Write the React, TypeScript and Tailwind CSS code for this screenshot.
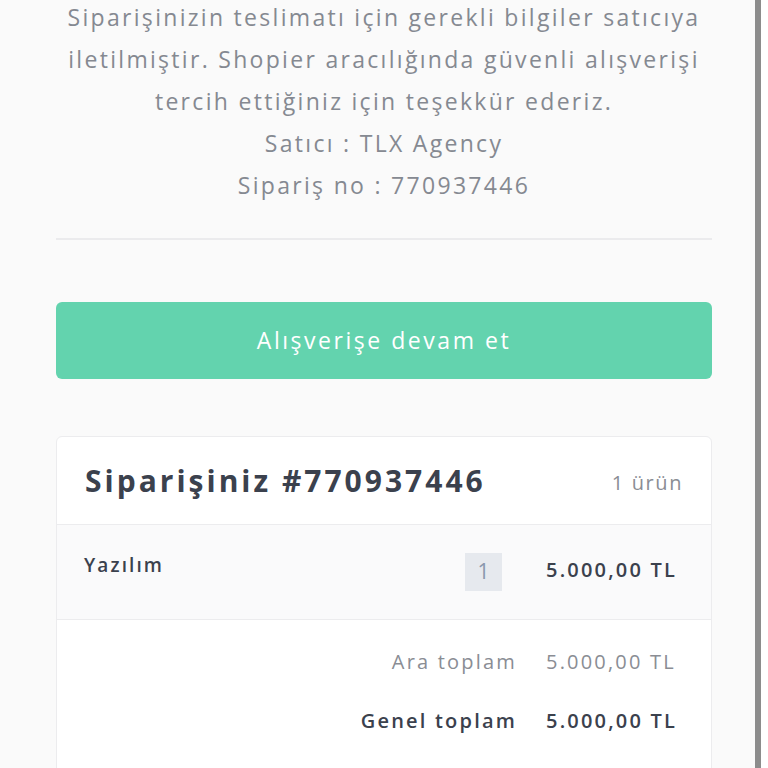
export default function App() {
  const font = { fontFamily: '"Open Sans", "Noto Sans", sans-serif' }

  return (
    <div className="flex h-[768px] w-[768px] overflow-hidden bg-[#fafafa]" style={font}>
      {/* Page content */}
      <div className="w-[755px] shrink-0 overflow-hidden">
        <div className="-mt-[4px] ml-[56px] mr-[43px]">
          {/* Thank-you message */}
          <div className="-mx-4 whitespace-nowrap text-center text-[23px] font-medium leading-[42px] tracking-[0.1em] text-[#858991]">
            <p>
              Siparişinizin teslimatı için gerekli bilgiler satıcıya
              <br />
              iletilmiştir. Shopier aracılığında güvenli alışverişi
              <br />
              tercih ettiğiniz için teşekkür ederiz.
            </p>
            <p>Satıcı : TLX Agency</p>
            <p>Sipariş no : 770937446</p>
          </div>

          <div className="mt-[32px] h-[2px] bg-[#ebebed]" />

          {/* Continue shopping */}
          <button className="mt-[62px] flex h-[77px] w-full items-center justify-center rounded-[6px] bg-[#63d3ae] text-[23px] font-medium tracking-[0.11em] text-white">
            Alışverişe devam et
          </button>

          {/* Order summary card */}
          <div className="mt-[57px] overflow-hidden rounded-[6px] border border-[#ececee] bg-white">
            <div className="flex h-[88px] items-center justify-between border-b border-[#ececee] pl-[28px] pr-[28px]">
              <h2 className="text-[30px] font-bold tracking-[0.1em] text-[#3b414d]">Siparişiniz #770937446</h2>
              <span className="mt-[4px] text-[20px] tracking-[0.08em] text-[#8a8d94]">1 ürün</span>
            </div>

            <div className="flex h-[95px] items-start border-b border-[#ececee] bg-[#fafafb] pl-[27px] pr-[32px] pt-[26px]">
              <span className="text-[19px] font-semibold tracking-[0.11em] text-[#3b414d]">Yazılım</span>
              <span className="ml-auto mt-[2px] flex h-[38px] w-[37px] items-center justify-center bg-[#e6e9ee] text-[21px] text-[#8a97ad]">
                1
              </span>
              <span className="ml-[44px] mt-[4px] w-[133px] whitespace-nowrap text-[20px] font-semibold tracking-[0.11em] text-[#3b414d]">
                5.000,00 TL
              </span>
            </div>

            <div className="flex flex-col gap-[29px] pb-[40px] pr-[32px] pt-[27px]">
              <div className="flex items-center justify-end whitespace-nowrap text-[20px] tracking-[0.11em] text-[#8a8d94]">
                <span>Ara toplam</span>
                <span className="ml-[29px] w-[133px]">5.000,00 TL</span>
              </div>
              <div className="flex items-center justify-end whitespace-nowrap text-[20px] font-semibold tracking-[0.11em] text-[#3b414d]">
                <span>Genel toplam</span>
                <span className="ml-[29px] w-[133px]">5.000,00 TL</span>
              </div>
            </div>
          </div>
        </div>
      </div>

      {/* Scrollbar edge */}
      <div className="w-[6px] shrink-0 bg-[#8c8c8c]" />
      <div className="flex-1 bg-white" />
    </div>
  )
}
